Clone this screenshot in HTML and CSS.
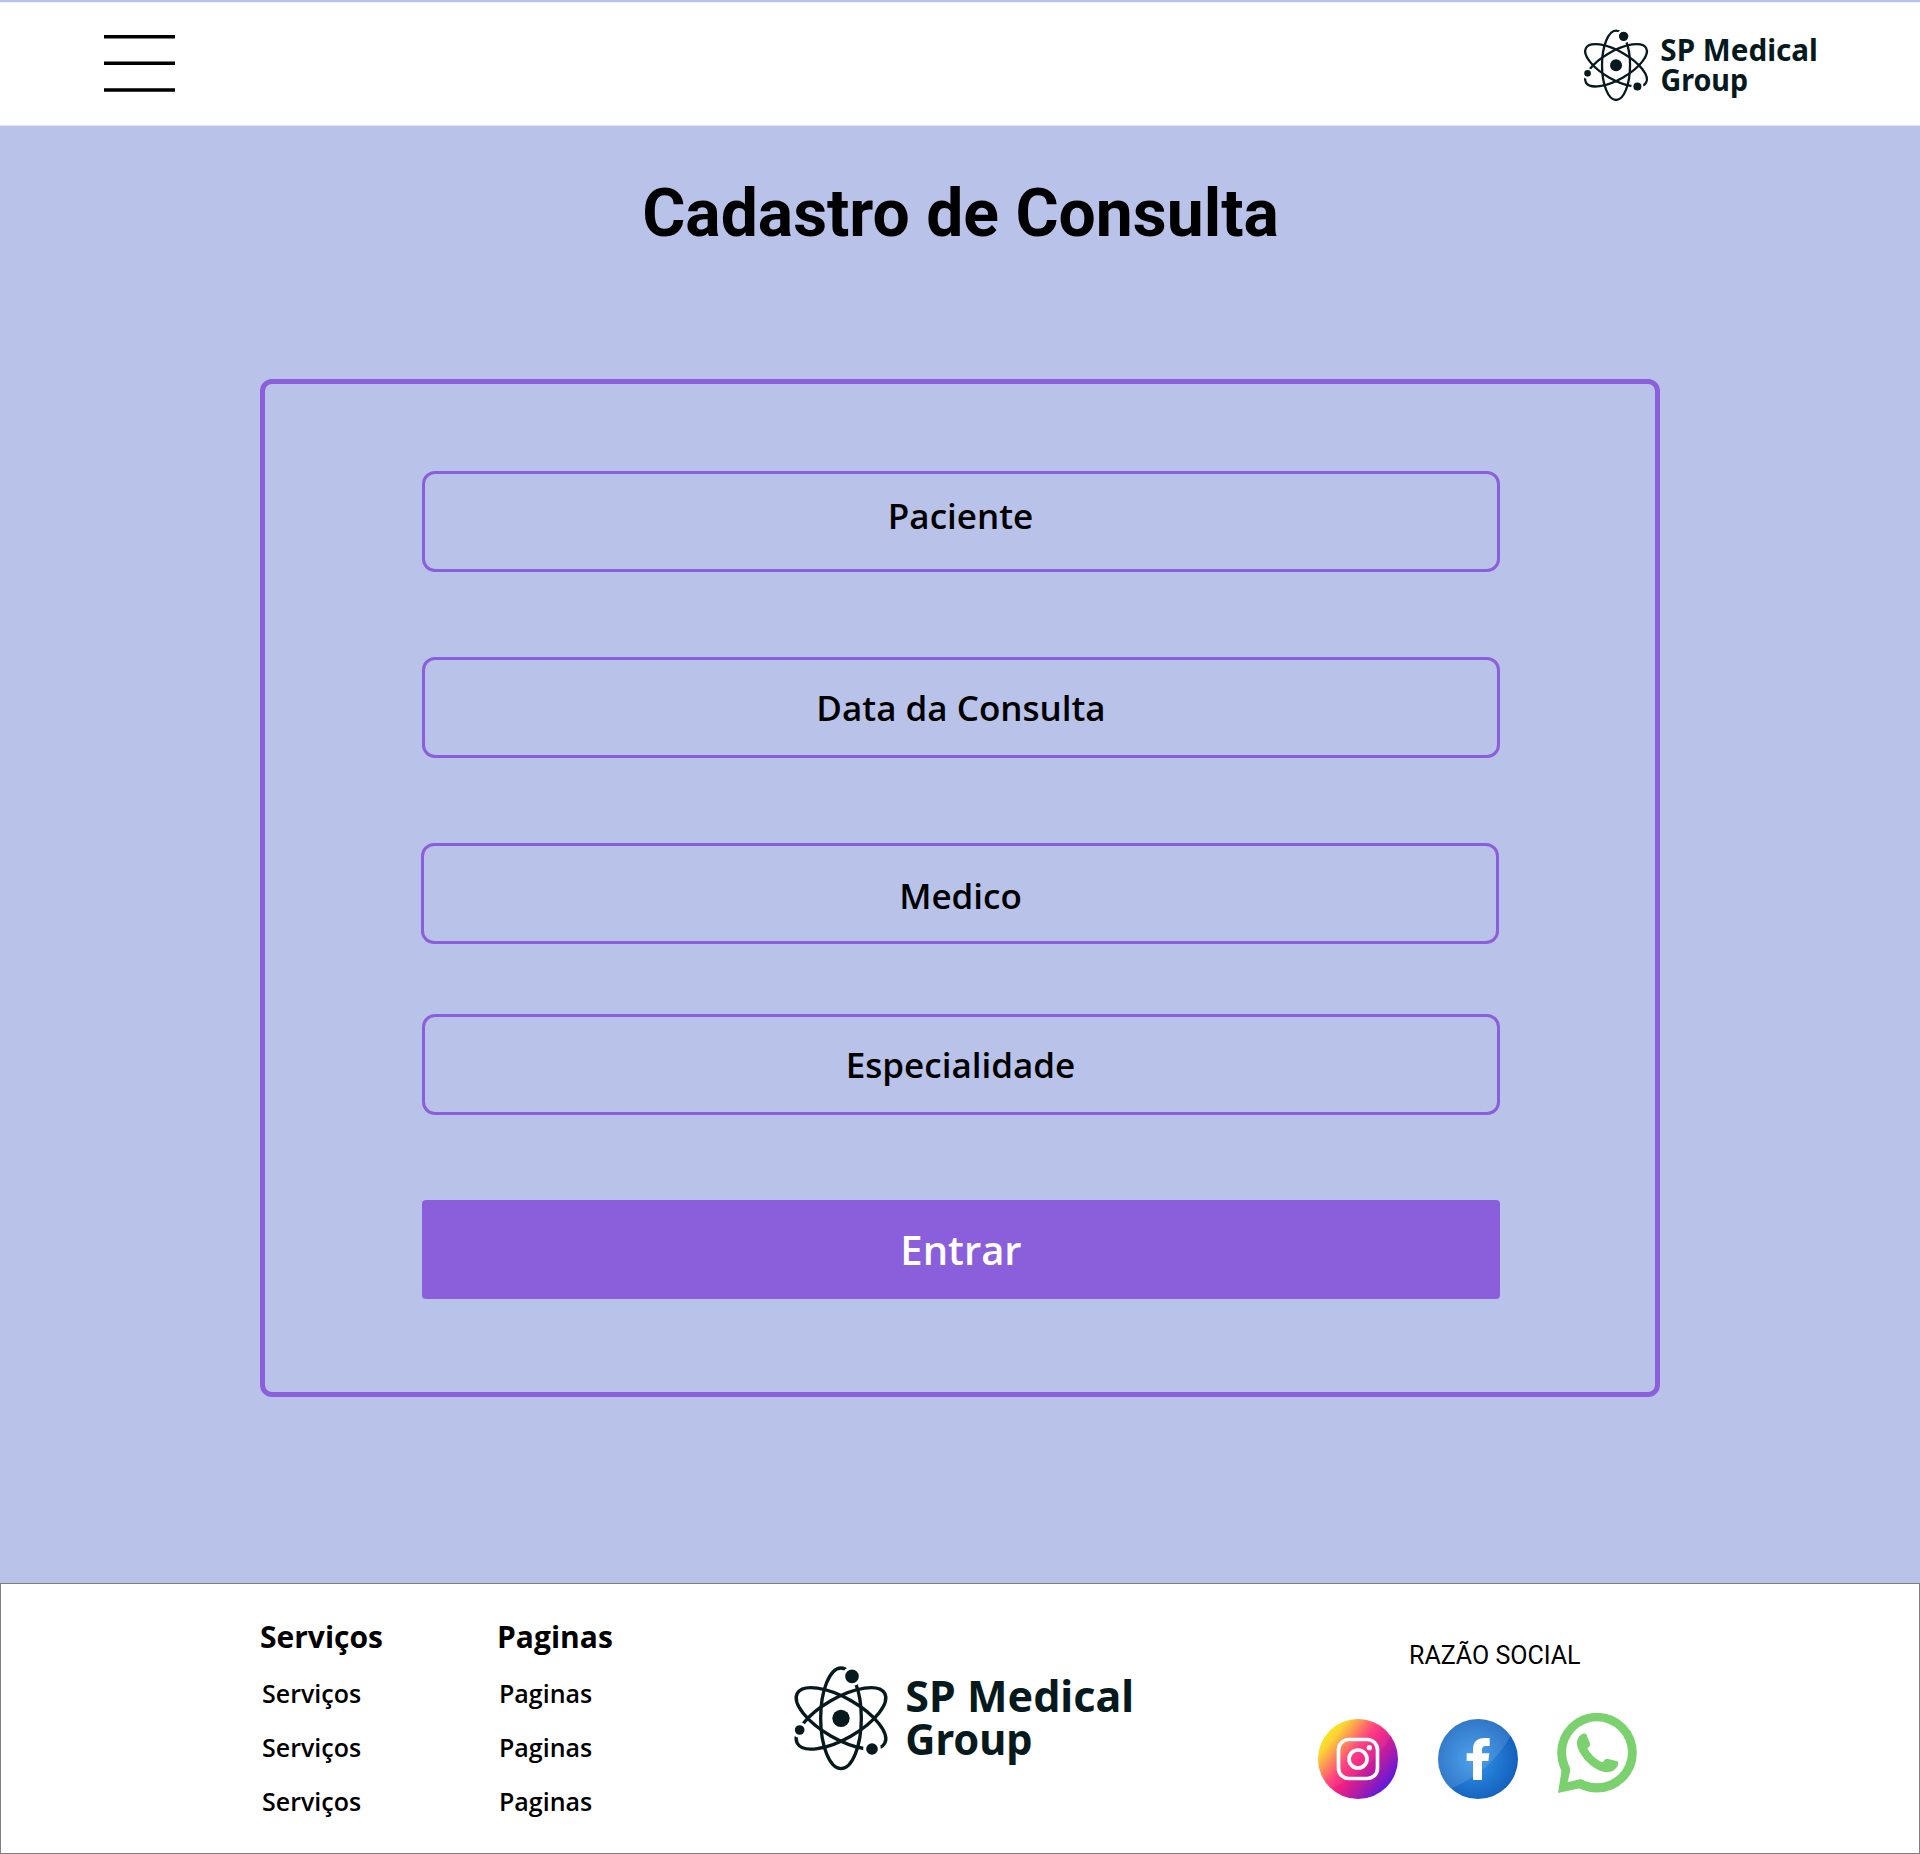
FILE: index.html
```html
<!DOCTYPE html>
<html lang="pt-BR">
<head>
<meta charset="utf-8">
<title>SP Medical Group - Cadastro de Consulta</title>
<link rel="stylesheet" href="styles.css">
</head>
<body>
<header class="topbar">
  <button class="menu" aria-label="Menu">
    <svg width="72" height="58" viewBox="0 0 72 58">
      <path d="M0 .9h71v3.600H0zM0 27.400h71V31H0zM0 54.200h71v3.600H0z"/>
    </svg>
  </button>
  <svg class="brand brand-small" viewBox="0 0 1110 390" role="img" aria-label="SP Medical Group">
    <g fill="none" stroke="#06191c" stroke-width="10">
      <ellipse cx="183" cy="205" rx="61" ry="151"/>
      <ellipse cx="183" cy="205" rx="61" ry="151" transform="rotate(60 183 205)"/>
      <ellipse cx="183" cy="205" rx="61" ry="151" transform="rotate(-60 183 205)"/>
    </g>
    <g fill="#06191c" stroke="#fff" stroke-width="9">
      <circle cx="216" cy="79" r="25"/>
      <circle cx="59" cy="240" r="19"/>
      <circle cx="276" cy="297" r="22"/>
    </g>
    <circle cx="183" cy="205" r="26" fill="#06191c"/>
    <text class="brand-text" x="376" y="187" textLength="686" lengthAdjust="spacingAndGlyphs">SP Medical</text>
    <text class="brand-text" x="376" y="316" textLength="382" lengthAdjust="spacingAndGlyphs">Group</text>
  </svg>
</header>

<main class="page">
  <h1 class="title">Cadastro de Consulta</h1>
  <form class="panel">
    <div class="field field-patient">Paciente</div>
    <div class="field">Data da Consulta</div>
    <div class="field field-doctor">Medico</div>
    <div class="field field-specialty">Especialidade</div>
    <button class="submit" type="button">Entrar</button>
  </form>
</main>

<footer class="footer">
  <section class="links links-services">
    <h2>Serviços</h2>
    <ul><li>Serviços</li><li>Serviços</li><li>Serviços</li></ul>
  </section>
  <section class="links links-pages">
    <h2>Paginas</h2>
    <ul><li>Paginas</li><li>Paginas</li><li>Paginas</li></ul>
  </section>
  <svg class="brand brand-large" viewBox="0 0 1110 390" role="img" aria-label="SP Medical Group">
    <g fill="none" stroke="#06191c" stroke-width="10">
      <ellipse cx="183" cy="205" rx="61" ry="151"/>
      <ellipse cx="183" cy="205" rx="61" ry="151" transform="rotate(60 183 205)"/>
      <ellipse cx="183" cy="205" rx="61" ry="151" transform="rotate(-60 183 205)"/>
    </g>
    <g fill="#06191c" stroke="#fff" stroke-width="9">
      <circle cx="216" cy="79" r="25"/>
      <circle cx="59" cy="240" r="19"/>
      <circle cx="276" cy="297" r="22"/>
    </g>
    <circle cx="183" cy="205" r="26" fill="#06191c"/>
    <text class="brand-text" x="376" y="187" textLength="686" lengthAdjust="spacingAndGlyphs">SP Medical</text>
    <text class="brand-text" x="376" y="316" textLength="382" lengthAdjust="spacingAndGlyphs">Group</text>
  </svg>
  <section class="social">
    <p class="social-title">RAZÃO SOCIAL</p>
    <div class="social-icons">
      <svg class="icon" viewBox="0 0 240 240" role="img" aria-label="Instagram">
        <defs>
          <linearGradient id="ig" x1=".1" y1=".18" x2=".9" y2=".82">
            <stop offset="0" stop-color="#fbe410"/>
            <stop offset=".1" stop-color="#fcd228"/>
            <stop offset=".4" stop-color="#ff3a78"/>
            <stop offset=".53" stop-color="#f41f80"/>
            <stop offset=".75" stop-color="#b01ca8"/>
            <stop offset="1" stop-color="#5a18e0"/>
          </linearGradient>
          <clipPath id="disc"><circle cx="120" cy="120" r="120"/></clipPath>
        </defs>
        <g clip-path="url(#disc)">
          <path d="M0 0h240v240H0z" fill="url(#ig)"/>
          <path d="M0 0H240Q190 140 46 206L0 240z" fill="#fff" opacity=".06"/>
        </g>
        <rect x="61.500" y="61.500" width="117" height="117" rx="31" fill="none" stroke="#fff" stroke-width="11"/>
        <circle cx="120" cy="120" r="27" fill="none" stroke="#fff" stroke-width="11"/>
        <circle cx="154" cy="86" r="8" fill="#fff"/>
      </svg>
      <svg class="icon" viewBox="0 0 240 240" role="img" aria-label="Facebook">
        <defs>
          <radialGradient id="fb" cx=".45" cy=".5" r=".55">
            <stop offset="0" stop-color="#3596ea"/>
            <stop offset="1" stop-color="#1260bd"/>
          </radialGradient>
        </defs>
        <g clip-path="url(#disc)">
          <path d="M0 0h240v240H0z" fill="url(#fb)"/>
          <path d="M0 0H240Q190 140 46 206L0 240z" fill="#fff" opacity=".12"/>
        </g>
        <path d="M155 57H140Q105 57 105 92V103H86V126H105V183H132V126H151L154 103H132V92Q132 81 143 81H155Z" fill="#fff"/>
      </svg>
      <svg class="icon icon-whatsapp" viewBox="0 0 240 240" role="img" aria-label="WhatsApp">
        <path d="M15 165L3 240L75 224Z" fill="#7cd16f"/>
        <circle cx="120" cy="119" r="119.500" fill="#7cd16f"/>
        <circle cx="120" cy="118" r="93" fill="#fff"/>
        <path d="M35 150L40 171L32 208L72 198L90 204L60 140Z" fill="#fff"/>
        <path d="M78 62C87 61 89 64 91 71L99 91C101 98 96 103 91 106C100 124 116 140 137 148C142 142 146 136 153 138L181 145C186 148 184 155 180 162C170 177 155 179 139 176C104 169 64 125 60 94C59 78 67 66 78 62Z" fill="#7cd16f"/>
      </svg>
    </div>
  </section>
</footer>
</body>
</html>
```

FILE: styles.css
```css
* {
  box-sizing: border-box;
  margin: 0;
  padding: 0;
}

body {
  display: flex;
  flex-direction: column;
  width: 1920px;
  height: 1854px;
  padding-top: 2px;
  background: #b9c2e8;
  color: #000;
  font-family: "Open Sans", "Noto Sans", sans-serif;
  overflow: hidden;
}

svg {
  display: block;
  flex: none;
}

.brand {
  overflow: visible;
}

.brand-text {
  fill: #06191c;
  font: 700 129px "Noto Sans", sans-serif;
}

.topbar {
  display: flex;
  justify-content: space-between;
  align-items: flex-start;
  height: 124px;
  padding: 16px 91px 0 104px;
  background: #fff;
  border-top: 1px solid #eef0fa;
  border-bottom: 1px solid #dfe2f4;
}

.menu {
  margin-top: 15px;
  border: 0;
  background: none;
}

.brand-small {
  width: 255px;
  height: 90px;
  margin-top: -1px;
}

.page {
  display: flex;
  flex-direction: column;
  align-items: center;
  height: 1457px;
}

.title {
  height: 253px;
  padding: 48px 0 0 1px;
  font: 700 66px/80px Roboto, sans-serif;
}

.panel {
  display: flex;
  flex-direction: column;
  width: 1400px;
  height: 1018px;
  padding: 87px 155px 0 157px;
  border: 5px solid #8b5fdb;
  border-radius: 12px;
}

.field {
  display: flex;
  justify-content: center;
  align-items: center;
  height: 101px;
  margin-bottom: 85px;
  border: 3px solid #8b5fdb;
  border-radius: 13px;
  font-size: 35px;
  font-weight: 600;
}

.field-patient {
  padding: 0 1px 12px 0;
}

.field-doctor {
  margin: 0 1px 70px -1px;
  padding: 3px 0 0 1px;
}

.field-specialty {
  padding-right: 1px;
}

.submit {
  height: 99px;
  padding-bottom: 1px;
  border: 0;
  border-radius: 4px;
  background: #8b5fdb;
  color: #fff;
  font: 600 40px "Open Sans", sans-serif;
}

.footer {
  display: flex;
  align-items: flex-start;
  height: 271px;
  padding-left: 259px;
  border: 1px solid #808080;
  background: #fff;
}

.links {
  padding-top: 31px;
}

.links h2 {
  font-size: 30px;
  line-height: 44px;
}

.links ul {
  padding: 7px 0 0 2px;
  list-style: none;
}

.links li {
  font-size: 25px;
  font-weight: 600;
  line-height: 54px;
}

.links-services {
  width: 237px;
}

.links-pages {
  width: 283px;
}

.brand-large {
  width: 370px;
  height: 130px;
  margin-top: 66px;
}

.social {
  margin-left: 168px;
  padding-top: 57px;
}

.social-title {
  padding-left: 91px;
  font: 400 25px/30px Roboto, sans-serif;
}

.social-icons {
  display: flex;
  gap: 40px;
  padding-top: 48px;
}

.icon {
  width: 80px;
  height: 80px;
}

.icon-whatsapp {
  margin: -6px 0 0 -1px;
}
```
